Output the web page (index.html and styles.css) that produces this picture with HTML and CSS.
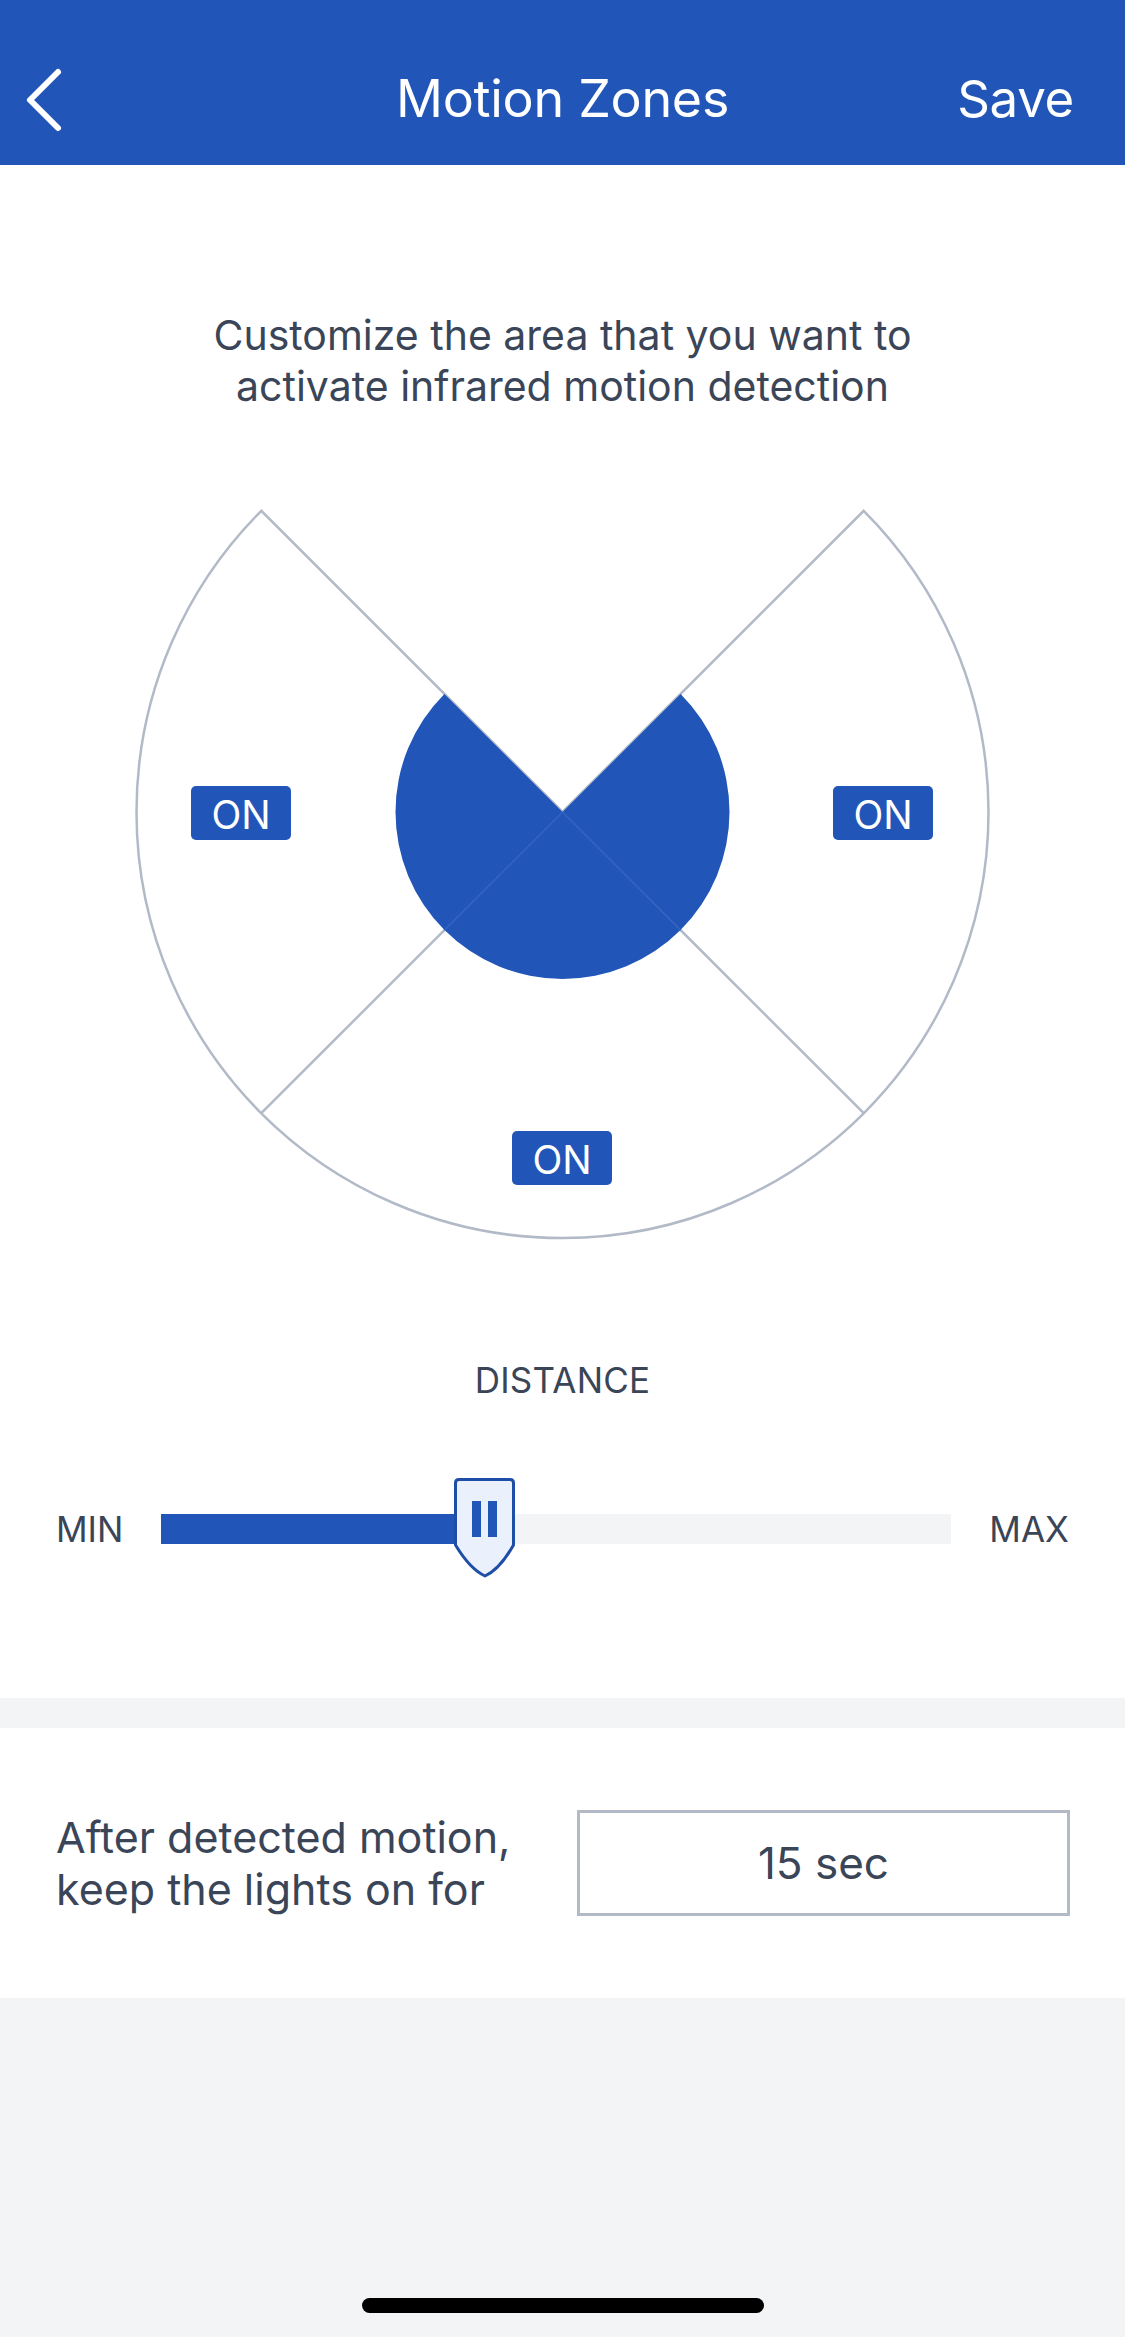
FILE: index.html
```html
<!DOCTYPE html>
<html>
<head>
<meta charset="utf-8">
<link rel="stylesheet" href="styles.css">
</head>
<body>
<div class="screen">
  <header class="nav">
    <div class="nav-row">
      <button class="back" aria-label="Back">
        <svg width="70" height="96" viewBox="0 0 70 96"><polyline points="58,22 30,50 58,78" fill="none" stroke="#fff" stroke-width="6" stroke-linecap="round" stroke-linejoin="round"/></svg>
      </button>
      <h1 class="title">Motion Zones</h1>
      <span class="save">Save</span>
    </div>
  </header>

  <section class="zones">
    <p class="intro">Customize the area that you want to activate infrared motion detection</p>
    <div class="diagram">
      <svg class="diagram-svg" width="1125" height="760" viewBox="0 0 1125 760">
        <path d="M562.5 322 L261.3 20.8 A426 426 0 1 0 863.7 20.8 Z" fill="#fff" stroke="#b2bac8" stroke-width="2.5" stroke-linejoin="miter"/>
        <line x1="562.5" y1="322" x2="261.3" y2="623.2" stroke="#b2bac8" stroke-width="2.5"/>
        <line x1="562.5" y1="322" x2="863.7" y2="623.2" stroke="#b2bac8" stroke-width="2.5"/>
        <path d="M562.5 322 L444.4 203.9 A167 167 0 1 0 680.6 203.9 Z" fill="#2156b8"/>
        <line x1="562.5" y1="322" x2="444.4" y2="440.1" stroke="#3563c0" stroke-width="1.5"/>
        <line x1="562.5" y1="322" x2="680.6" y2="440.1" stroke="#3563c0" stroke-width="1.5"/>
        <g class="badge">
          <rect x="191" y="296" width="100" height="54" rx="5" fill="#2156b8"/>
          <text x="241" y="324" class="badge-text">ON</text>
        </g>
        <g class="badge">
          <rect x="833" y="296" width="100" height="54" rx="5" fill="#2156b8"/>
          <text x="883" y="324" class="badge-text">ON</text>
        </g>
        <g class="badge">
          <rect x="512" y="641" width="100" height="54" rx="5" fill="#2156b8"/>
          <text x="562" y="669" class="badge-text">ON</text>
        </g>
      </svg>
    </div>

    <div class="distance-label">DISTANCE</div>
    <div class="slider-row">
      <span class="slider-end">MIN</span>
      <div class="track">
        <div class="fill" style="width: 37.1%"></div>
        <svg class="thumb" width="64" height="102" viewBox="0 0 64 102">
          <path d="M2.5 6 Q2.5 2.5 6 2.5 L57 2.5 Q60.5 2.5 60.5 6 L60.5 68 Q47 92 32 99 Q17 92 2.5 68 Z" fill="#eaf1fc" stroke="#1f4ea6" stroke-width="3" stroke-linejoin="round"/>
          <rect x="19" y="24" width="9" height="36" fill="#2156b8"/>
          <rect x="35" y="24" width="9" height="36" fill="#2156b8"/>
        </svg>
      </div>
      <span class="slider-end">MAX</span>
    </div>
  </section>

  <section class="timer">
    <p class="timer-label">After detected motion,<br>keep the lights on for</p>
    <div class="timer-input">15 sec</div>
  </section>

  <div class="home-area">
    <div class="home-indicator"></div>
  </div>
</div>
</body>
</html>
```

FILE: styles.css
```css
* {
  box-sizing: border-box;
}

html, body {
  margin: 0;
  padding: 0;
  background: #f3f4f6;
}

body {
  font-family: "Inter", "Roboto", "Liberation Sans", sans-serif;
  color: #3a4558;
}

.screen {
  width: 1125px;
  min-height: 2337px;
  display: flex;
  flex-direction: column;
  background: #f3f4f6;
}

.nav {
  height: 165px;
  background: #2156b8;
  padding-top: 50px;
}

.nav-row {
  position: relative;
  height: 96px;
  display: flex;
  align-items: center;
  justify-content: center;
}

.back {
  position: absolute;
  left: 0;
  top: 0;
  width: 70px;
  height: 96px;
  padding: 0;
  border: 0;
  background: none;
}

.back svg {
  display: block;
}

.title {
  margin: 0;
  font-size: 52px;
  font-weight: 400;
  color: #ffffff;
  letter-spacing: -0.3px;
}

.save {
  position: absolute;
  right: 51px;
  top: 50%;
  transform: translateY(-50%);
  font-size: 51px;
  color: #ffffff;
  letter-spacing: -0.3px;
}

.zones {
  background: #ffffff;
  display: flex;
  flex-direction: column;
  align-items: center;
  padding-top: 145px;
  padding-bottom: 119px;
}

.intro {
  margin: 0;
  width: 760px;
  text-align: center;
  font-size: 41px;
  line-height: 51px;
  color: #3a4558;
}

.diagram {
  margin-top: 78px;
  width: 1125px;
  height: 760px;
}

.diagram-svg {
  display: block;
}

.badge-text {
  fill: #ffffff;
  font-family: "Inter", "Roboto", "Liberation Sans", sans-serif;
  font-size: 39px;
  text-anchor: middle;
  dominant-baseline: central;
}

.distance-label {
  margin-top: 108px;
  font-size: 35px;
  line-height: 44px;
  color: #3a4558;
  letter-spacing: 0.2px;
}

.slider-row {
  margin-top: 77px;
  width: 100%;
  height: 100px;
  padding: 0 56px;
  display: flex;
  align-items: center;
  gap: 38px;
}

.slider-end {
  font-size: 35px;
  color: #3a4558;
}

.track {
  position: relative;
  flex: 1;
  height: 30px;
  background: #f3f4f6;
}

.fill {
  height: 100%;
  background: #2156b8;
}

.thumb {
  position: absolute;
  left: calc(37.1% - 1px);
  top: -37px;
  display: block;
}

.timer {
  margin-top: 30px;
  height: 270px;
  background: #ffffff;
  display: flex;
  align-items: center;
  justify-content: space-between;
  padding: 0 55px 0 56px;
}

.timer-label {
  margin: 0;
  font-size: 43px;
  line-height: 52px;
  color: #3a4558;
}

.timer-input {
  width: 493px;
  height: 106px;
  border: 3px solid #b2bac8;
  display: flex;
  align-items: center;
  justify-content: center;
  font-size: 44px;
  color: #3a4558;
}

.home-area {
  flex: 1;
  display: flex;
  align-items: flex-end;
  justify-content: center;
  padding-bottom: 24px;
}

.home-indicator {
  width: 402px;
  height: 15px;
  border-radius: 8px;
  background: #000000;
}
```
